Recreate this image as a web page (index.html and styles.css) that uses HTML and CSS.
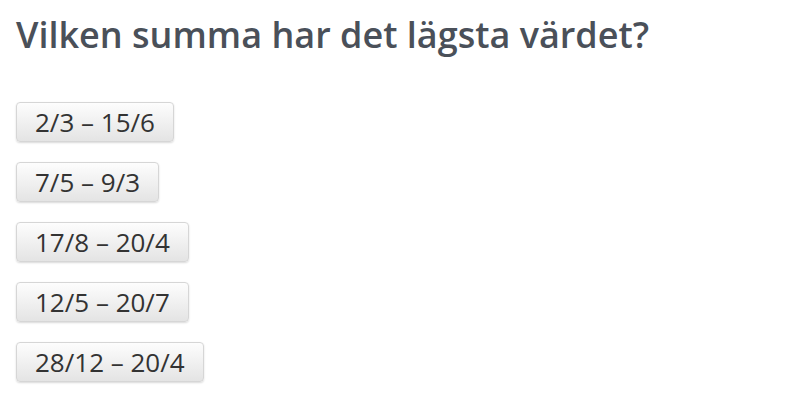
FILE: index.html
```html
<!DOCTYPE html>
<html lang="sv">
<head>
    <meta charset="UTF-8">
    <meta name="viewport" content="width=device-width, initial-scale=1.0">
    <title>Vilken summa har det lägsta värdet?</title>
    <link rel="stylesheet" href="styles.css">
</head>
<body>
    <div class="question">
        <h1>Vilken summa har det lägsta värdet?</h1>

        <div class="answers">
            <button class="answer">2/3 – 15/6</button>
            <button class="answer">7/5 – 9/3</button>
            <button class="answer">17/8 – 20/4</button>
            <button class="answer">12/5 – 20/7</button>
            <button class="answer">28/12 – 20/4</button>
        </div>
    </div>
</body>
</html>
```

FILE: styles.css
```css
body {
    font-family: 'Open Sans', 'Liberation Sans', sans-serif;
    background: #fff;
    color: #333;
    margin: 0;
    padding: 13px 16px;
}
h1 {
    font-size: 36px;
    font-weight: 600;
    color: #4a5059;
    margin: 0 0 45px;
    line-height: 44px;
}
.answers {
    display: flex;
    flex-direction: column;
    align-items: flex-start;
    gap: 20px;
}
.answer {
    font-family: inherit;
    font-size: 26px;
    color: #333;
    height: 40px;
    line-height: 38px;
    padding: 0 18px;
    background: linear-gradient(#fdfdfd, #e4e4e4);
    border: 1px solid #d6d6d6;
    border-radius: 4px;
    box-shadow: 0 1px 2px rgba(0, 0, 0, 0.15);
    cursor: pointer;
}
.answer:hover {
    background: linear-gradient(#fff, #ebebeb);
}
```
